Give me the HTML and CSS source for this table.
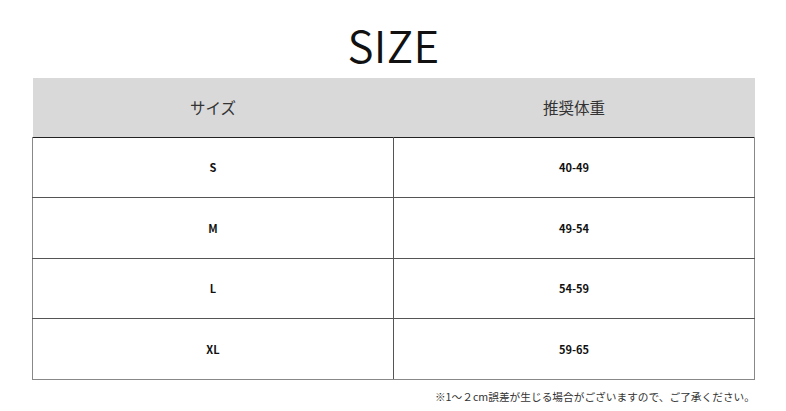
FILE: index.html
```html
<!DOCTYPE html>
<html lang="ja">
<head>
<meta charset="utf-8">
<link rel="stylesheet" href="styles.css">
</head>
<body>
<div class="page">
  <h1 class="title">SIZE</h1>
  <table class="size-table">
    <thead>
      <tr><th>サイズ</th><th>推奨体重</th></tr>
    </thead>
    <tbody>
      <tr><td>S</td><td>40-49</td></tr>
      <tr><td>M</td><td>49-54</td></tr>
      <tr><td>L</td><td>54-59</td></tr>
      <tr><td>XL</td><td>59-65</td></tr>
    </tbody>
  </table>
  <p class="note">※1～２cm誤差が生じる場合がございますので、ご了承ください。</p>
</div>
</body>
</html>
```
FILE: styles.css
```css
* { box-sizing: border-box; }
html, body { margin: 0; padding: 0; background: #fff; }
body {
  font-family: "Noto Sans CJK JP", "Noto Sans", sans-serif;
  color: #111;
}
.page {
  width: 786px;
  padding: 16px 31px 0 32px;
}
.title {
  margin: 0;
  height: 62px;
  text-align: center;
  font-size: 44px;
  font-weight: 350;
  line-height: 56px;
  letter-spacing: 0.3px;
  color: #111;
}
.size-table {
  width: 723px;
  border-collapse: collapse;
  table-layout: fixed;
}
.size-table th {
  background: #d9d9d9;
  height: 59px;
  font-weight: 400;
  font-size: 15.5px;
  color: #333;
  padding: 0;
  text-align: center;
}
.size-table td {
  height: 60.5px;
  border: 1px solid #555;
  border-top-color: #222;
  font-size: 11px;
  font-weight: 700;
  text-align: center;
  padding: 0;
  color: #111;
}
.size-table td:first-child { border-left-color: #888; }
.size-table td:last-child { border-right-color: #888; }
.size-table tr:last-child td { border-bottom-color: #888; }
.note {
  margin: 9px 0 0;
  text-align: right;
  font-size: 10.7px;
  color: #333;
}
```
